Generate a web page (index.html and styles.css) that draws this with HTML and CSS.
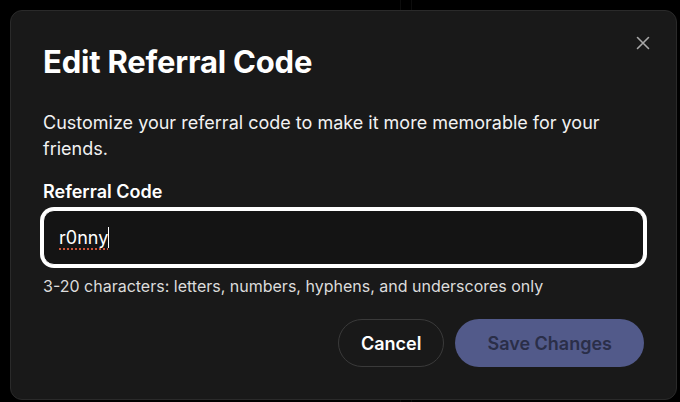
FILE: index.html
```html
<!DOCTYPE html>
<html lang="en">
<head>
<meta charset="utf-8">
<title>Edit Referral Code</title>
<link rel="stylesheet" href="styles.css">
</head>
<body>
<div class="backdrop">
  <div class="dialog" role="dialog" aria-labelledby="dlg-title">
    <button class="close" aria-label="Close">
      <svg width="14" height="14" viewBox="0 0 14 14" aria-hidden="true"><path d="M1.5 1.5 L12.5 12.5 M12.5 1.5 L1.5 12.5" stroke="currentColor" stroke-width="1.6" stroke-linecap="round"/></svg>
    </button>
    <h2 class="title" id="dlg-title">Edit Referral Code</h2>
    <p class="desc">Customize your referral code to make it more memorable for your friends.</p>
    <label class="label">Referral Code</label>
    <div class="input"><span class="value">r0nny</span><span class="caret"></span></div>
    <p class="help">3-20 characters: letters, numbers, hyphens, and underscores only</p>
    <div class="actions">
      <button class="btn btn-cancel">Cancel</button>
      <button class="btn btn-save">Save Changes</button>
    </div>
  </div>
</div>
</body>
</html>
```
FILE: styles.css
```css
* { box-sizing: border-box; }
html, body { margin: 0; height: 100%; }
body {
  background: #000;
  font-family: Inter, "Noto Sans", "Liberation Sans", sans-serif;
  color: #fff;
}
.backdrop {
  height: 100%;
  padding: 10px 3px 2px 10px;
  background:
    linear-gradient(to right, transparent 400px, #0d0d0d 400px, #0d0d0d 401px, transparent 401px, transparent 411px, #0d0d0d 411px, #0d0d0d 412px, transparent 412px);
}
.dialog {
  position: relative;
  height: 100%;
  background: #191919;
  border: 1px solid #2a2a2a;
  border-radius: 12px;
  padding: 32px;
  display: flex;
  flex-direction: column;
}
.close {
  position: absolute;
  top: 25px;
  right: 26px;
  width: 14px;
  height: 14px;
  padding: 0;
  border: 0;
  background: none;
  color: #a8a8a8;
  display: flex;
}
.title {
  margin: 0;
  font-size: 31px;
  line-height: 38px;
  font-weight: 700;
  letter-spacing: -0.2px;
}
.desc {
  margin: 29px 0 0;
  font-size: 18px;
  line-height: 26px;
  color: #f2f2f2;
}
.label {
  margin-top: 18px;
  font-size: 18px;
  line-height: 24px;
  font-weight: 600;
}
.input {
  margin-top: 6px;
  height: 55px;
  border: 1px solid #fff;
  box-shadow: 0 0 0 3px #fff;
  border-radius: 11px;
  background: #141414;
  display: flex;
  align-items: center;
  padding: 0 15px;
  font-size: 18px;
}
.value {
  text-decoration: underline dotted #d0553a;
  text-underline-offset: 4px;
  text-decoration-thickness: 1.5px;
}
.caret {
  width: 1px;
  height: 21px;
  background: #fff;
}
.help {
  margin: 11px 0 0;
  font-size: 16px;
  line-height: 20px;
  color: #dcdcdc;
}
.actions {
  margin-top: auto;
  display: flex;
  justify-content: flex-end;
  gap: 11px;
}
.btn {
  height: 48px;
  border-radius: 24px;
  font-family: inherit;
  font-size: 18px;
  font-weight: 600;
  padding: 0 22px;
}
.btn-cancel {
  background: transparent;
  border: 1px solid #3a3a3a;
  color: #fff;
}
.btn-save {
  background: #525a8a;
  border: 0;
  color: #2a2e48;
  padding: 0 32px;
}
```
